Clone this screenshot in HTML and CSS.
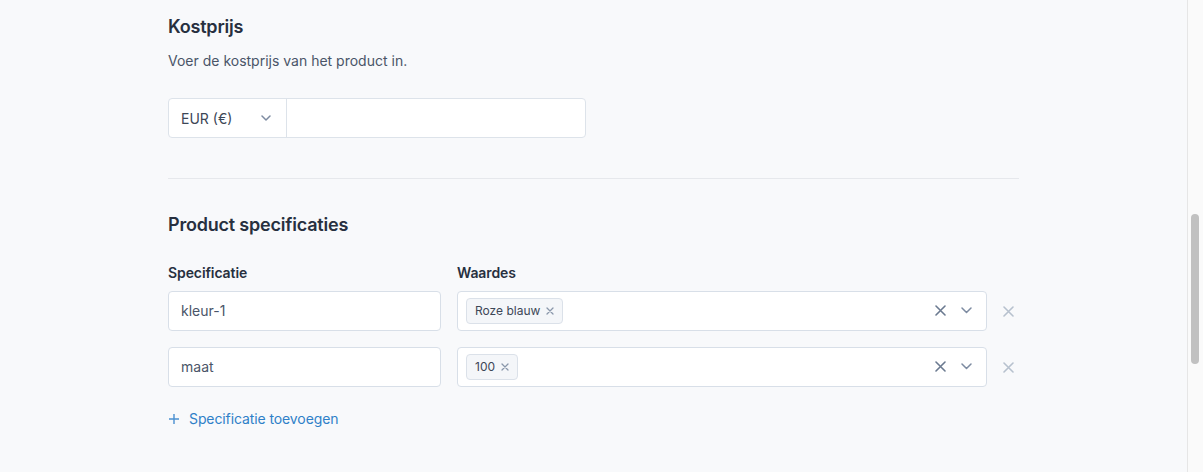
FILE: index.html
```html
<!DOCTYPE html>
<html lang="nl">

<head>
    <meta charset="UTF-8" />
    <meta name="viewport" content="width=device-width, initial-scale=1.0" />
    <title>Product bewerken</title>
    <link rel="stylesheet" href="styles.css">
</head>

<body>
    <div class="page">
        <main class="content">
            <section class="section">
                <h2>Kostprijs</h2>
                <p class="hint">Voer de kostprijs van het product in.</p>
                <div class="price-group">
                    <div class="currency">
                        <span>EUR (€)</span>
                        <svg class="chevron" width="10" height="6" viewBox="0 0 10 6"><path d="M1 1l4 4 4-4" /></svg>
                    </div>
                    <div class="price-input"></div>
                </div>
            </section>

            <hr class="divider">

            <section class="section">
                <h2 class="specs-title">Product specificaties</h2>
                <div class="spec-grid">
                    <label class="label">Specificatie</label>
                    <label class="label">Waardes</label>
                    <span></span>

                    <div class="field">kleur-1</div>
                    <div class="multi">
                        <span class="tag">Roze blauw <svg width="8" height="8" viewBox="0 0 8 8"><path d="M1 1l6 6M7 1l-6 6" /></svg></span>
                        <span class="multi-actions">
                            <svg class="clear" width="11" height="11" viewBox="0 0 11 11"><path d="M1 1l9 9M10 1l-9 9" /></svg>
                            <svg class="chevron" width="11" height="7" viewBox="0 0 11 7"><path d="M1 1l4.5 4.5L10 1" /></svg>
                        </span>
                    </div>
                    <svg class="remove" width="11" height="11" viewBox="0 0 11 11"><path d="M1 1l9 9M10 1l-9 9" /></svg>

                    <div class="field">maat</div>
                    <div class="multi">
                        <span class="tag">100 <svg width="8" height="8" viewBox="0 0 8 8"><path d="M1 1l6 6M7 1l-6 6" /></svg></span>
                        <span class="multi-actions">
                            <svg class="clear" width="11" height="11" viewBox="0 0 11 11"><path d="M1 1l9 9M10 1l-9 9" /></svg>
                            <svg class="chevron" width="11" height="7" viewBox="0 0 11 7"><path d="M1 1l4.5 4.5L10 1" /></svg>
                        </span>
                    </div>
                    <svg class="remove" width="11" height="11" viewBox="0 0 11 11"><path d="M1 1l9 9M10 1l-9 9" /></svg>
                </div>

                <a class="add-spec" href="#">
                    <svg width="10" height="10" viewBox="0 0 10 10"><path d="M5 0v10M0 5h10" /></svg>
                    Specificatie toevoegen
                </a>
            </section>
        </main>

        <div class="scrollbar">
            <div class="thumb"></div>
        </div>
    </div>
</body>

</html>
```

FILE: styles.css
```css
* {
    box-sizing: border-box;
}

body {
    margin: 0;
    font-family: Inter, 'Noto Sans', sans-serif;
    background: #f8f9fb;
    color: #2d3748;
    height: 100vh;
    overflow: hidden;
}

.page {
    display: flex;
    height: 100%;
}

.content {
    flex: 1;
    display: flex;
    flex-direction: column;
    align-items: center;
    padding-top: 15px;
}

.section {
    width: 851px;
}

h2 {
    margin: 0;
    font-size: 18px;
    line-height: 24px;
    font-weight: 600;
    letter-spacing: -0.2px;
    color: #27303f;
}

.hint {
    margin: 12px 0 0;
    font-size: 14px;
    line-height: 20px;
    color: #4a5568;
}

.price-group {
    display: flex;
    width: 418px;
    height: 40px;
    margin-top: 27px;
    background: #fff;
    border: 1px solid #dde3ea;
    border-radius: 4px;
}

.currency {
    width: 118px;
    display: flex;
    align-items: center;
    justify-content: space-between;
    padding: 0 15px 0 12px;
    border-right: 1px solid #dde3ea;
    font-size: 14px;
    color: #3d4757;
}

.price-input {
    flex: 1;
}

svg path {
    fill: none;
    stroke-width: 1.5;
    stroke-linecap: round;
    stroke-linejoin: round;
}

.chevron path {
    stroke: #7d8ba1;
}

.divider {
    width: 851px;
    margin: 40px 0 0;
    border: 0;
    border-top: 1px solid #e6e8ec;
}

.specs-title {
    margin-top: 34px;
}

.spec-grid {
    display: grid;
    grid-template-columns: 273px 530px 1fr;
    column-gap: 16px;
    row-gap: 16px;
    align-items: center;
    margin-top: 26px;
}

.label {
    font-size: 14px;
    line-height: 20px;
    font-weight: 600;
    letter-spacing: -0.1px;
    color: #27303f;
    margin-bottom: -8px;
}

.field,
.multi {
    height: 40px;
    background: #fff;
    border: 1px solid #d8dfe8;
    border-radius: 4px;
    font-size: 14px;
    color: #4a5568;
    display: flex;
    align-items: center;
    padding-bottom: 1px;
}

.field {
    padding-left: 12px;
    padding-right: 12px;
}

.multi {
    padding-left: 8px;
    padding-right: 14px;
    justify-content: space-between;
}

.tag {
    display: inline-flex;
    align-items: center;
    gap: 6px;
    height: 26px;
    padding: 0 8px;
    background: #f4f6f9;
    border: 1px solid #dbe1e9;
    border-radius: 4px;
    font-size: 12px;
    color: #3d4757;
}

.tag path {
    stroke: #8a97ab;
    stroke-width: 1.3;
}

.multi-actions {
    display: flex;
    align-items: center;
    gap: 15px;
}

.clear path {
    stroke: #6b7a90;
    stroke-width: 1.6;
}

.remove {
    justify-self: start;
}

.remove path {
    stroke: #b7c1ce;
    stroke-width: 1.6;
}

.add-spec {
    display: inline-flex;
    align-items: center;
    gap: 10px;
    margin-top: 22px;
    padding-left: 1px;
    font-size: 14px;
    line-height: 20px;
    letter-spacing: -0.1px;
    color: #2f80c8;
    text-decoration: none;
}

.add-spec path {
    stroke: #4a90d1;
    stroke-width: 1.4;
}

/* fake window scrollbar */
.scrollbar {
    width: 16px;
    flex-shrink: 0;
    background: #fafafa;
    border-left: 1px solid #e6e6e6;
    padding: 214px 0 0 3px;
}

.thumb {
    width: 8px;
    height: 150px;
    border-radius: 4px;
    background: #c1c1c1;
}
```
